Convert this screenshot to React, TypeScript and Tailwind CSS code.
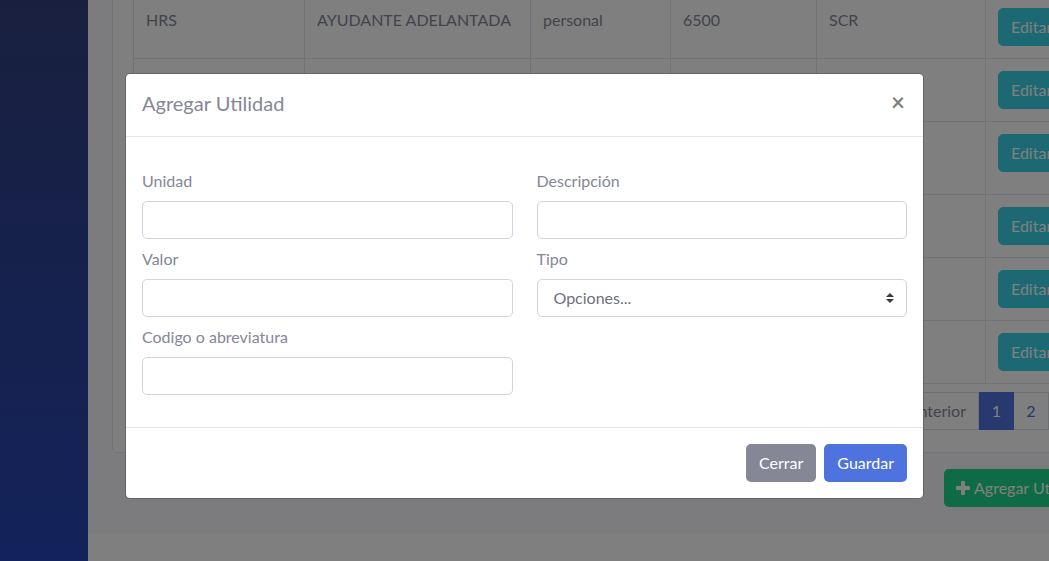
import { useState } from "react";

const rows = [
  { unidad: "HRS", descripcion: "AYUDANTE ADELANTADA", tipo: "personal", valor: "6500", codigo: "SCR" },
  { unidad: "M2", descripcion: "ALBAÑIL PRIMERA", tipo: "personal", valor: "8500", codigo: "ALB" },
  { unidad: "KG", descripcion: "CEMENTO PORTLAND GRIS TIPO I", tipo: "material", valor: "4200", codigo: "CEM" },
  { unidad: "M3", descripcion: "ARENA LAVADA", tipo: "material", valor: "18000", codigo: "ARN" },
  { unidad: "UND", descripcion: "LADRILLO COMUN", tipo: "material", valor: "350", codigo: "LAD" },
  { unidad: "GL", descripcion: "HERRAMIENTA MENOR", tipo: "equipo", valor: "1200", codigo: "HER" },
];

const colWidths = ["171px", "226px", "140px", "146px", "169px", "154px"];

const Field = ({ label, children }: { label: string; children: React.ReactNode }) => (
  <div className="flex flex-col">
    <label className="mb-2 text-[16px] leading-6 text-[#858796]">{label}</label>
    {children}
  </div>
);

const TextInput = () => (
  <input
    type="text"
    className="h-[38px] w-full rounded-[5px] border border-[#d1d3e2] bg-white px-3 text-[16px] text-[#6e707e] outline-none"
  />
);

const App = () => {
  const [open, setOpen] = useState(true);

  return (
    <div className="relative flex h-[561px] w-[1049px] overflow-hidden font-[family-name:Lato,sans-serif]">
      {/* Sidebar */}
      <aside className="w-[88px] shrink-0 bg-gradient-to-b from-[#32407e] to-[#2646b6]" />

      {/* Page behind the modal */}
      <main className="flex w-[1184px] shrink-0 flex-col bg-[#f8f9fc]">
        <div className="h-[533px] overflow-hidden px-6">
          <div className="-mt-[26px] w-[1048px] rounded-[5px] border border-[#e3e6f0] bg-white px-5 pt-5 pb-[22px]">
            <table className="w-full table-fixed border-collapse text-[16px] leading-6 text-[#858796]">
              <colgroup>
                {colWidths.map((w, i) => (
                  <col key={i} style={{ width: w }} />
                ))}
              </colgroup>
              <tbody>
                {rows.map((r) => (
                  <tr key={r.codigo}>
                    <td className="border border-[#e3e6f0] p-3 align-top">{r.unidad}</td>
                    <td className="border border-[#e3e6f0] p-3 align-top">{r.descripcion}</td>
                    <td className="border border-[#e3e6f0] p-3 align-top">{r.tipo}</td>
                    <td className="border border-[#e3e6f0] p-3 align-top">{r.valor}</td>
                    <td className="border border-[#e3e6f0] p-3 align-top">{r.codigo}</td>
                    <td className="border border-[#e3e6f0] p-3 align-top">
                      <button className="rounded-[5px] border border-[#38d3e6] bg-[#38d3e6] px-3 py-[6px] leading-6 text-white">
                        Editar
                      </button>
                    </td>
                  </tr>
                ))}
              </tbody>
            </table>

            <div className="mt-2 flex justify-end text-[16px] leading-6">
              <span className="rounded-l-[5px] border border-[#dddfeb] bg-white px-3 py-[6px] text-[#858796]">
                Anterior
              </span>
              <span className="w-[35px] border border-[#4e73df] bg-[#4e73df] py-[6px] text-center text-white">1</span>
              <span className="w-[35px] border border-l-0 border-[#dddfeb] bg-white py-[6px] text-center text-[#4e73df]">2</span>
              <span className="w-[90px] rounded-r-[5px] border border-l-0 border-[#dddfeb] bg-white py-[6px] text-center text-[#4e73df]">
                Siguiente
              </span>
            </div>
          </div>

          <div className="mt-[16px] flex">
            <button className="ml-[832px] flex items-center gap-1 whitespace-nowrap rounded-[5px] bg-[#1cd68c] px-3 py-[7px] text-[16px] leading-6 text-white">
              <svg viewBox="0 0 14 14" className="h-[14px] w-[14px]" fill="currentColor">
                <rect x="5" y="0" width="4" height="14" rx="1" />
                <rect x="0" y="5" width="14" height="4" rx="1" />
              </svg>
              Agregar Utilidad
            </button>
          </div>
        </div>
        <footer className="flex-1 bg-white" />
      </main>

      {/* Backdrop */}
      <div className="absolute inset-0 bg-black/50" />

      {/* Modal */}
      {open && (
        <div className="absolute inset-0 flex items-start justify-center pt-[73px]">
          <div className="w-[799px] rounded-[5px] border border-black/20 bg-white bg-clip-padding">
            <div className="flex items-start justify-between border-b border-[#e3e6f0] p-4">
              <h5 className="mb-1 text-[20px] leading-[26px] text-[#858796]">Agregar Utilidad</h5>
              <button
                onClick={() => setOpen(false)}
                className="mr-[2px] text-[24px] font-bold leading-6 text-black/50"
              >
                ×
              </button>
            </div>

            <div className="px-4 py-8">
              <div className="grid grid-cols-2 gap-x-6">
                <div className="flex flex-col gap-2">
                  <Field label="Unidad">
                    <TextInput />
                  </Field>
                  <Field label="Valor">
                    <TextInput />
                  </Field>
                  <Field label="Codigo o abreviatura">
                    <TextInput />
                  </Field>
                </div>
                <div className="flex flex-col gap-2">
                  <Field label="Descripción">
                    <TextInput />
                  </Field>
                  <Field label="Tipo">
                    <div className="flex h-[38px] w-full items-center justify-between rounded-[5px] border border-[#d1d3e2] bg-white pl-4 pr-3 text-[16px] text-[#6e707e]">
                      <span>Opciones...</span>
                      <svg viewBox="0 0 4 5" className="h-[10px] w-[8px]">
                        <path fill="#343a40" d="M2 0L0 2h4zm0 5L0 3h4z" />
                      </svg>
                    </div>
                  </Field>
                </div>
              </div>
            </div>

            <div className="flex justify-end gap-2 border-t border-[#e3e6f0] px-4 py-4">
              <button className="rounded-[5px] bg-[#858796] px-[13px] py-[7px] text-[16px] leading-6 text-white">
                Cerrar
              </button>
              <button className="rounded-[5px] bg-[#4e73df] px-[13px] py-[7px] text-[16px] leading-6 text-white">
                Guardar
              </button>
            </div>
          </div>
        </div>
      )}
    </div>
  );
};

export default App;
